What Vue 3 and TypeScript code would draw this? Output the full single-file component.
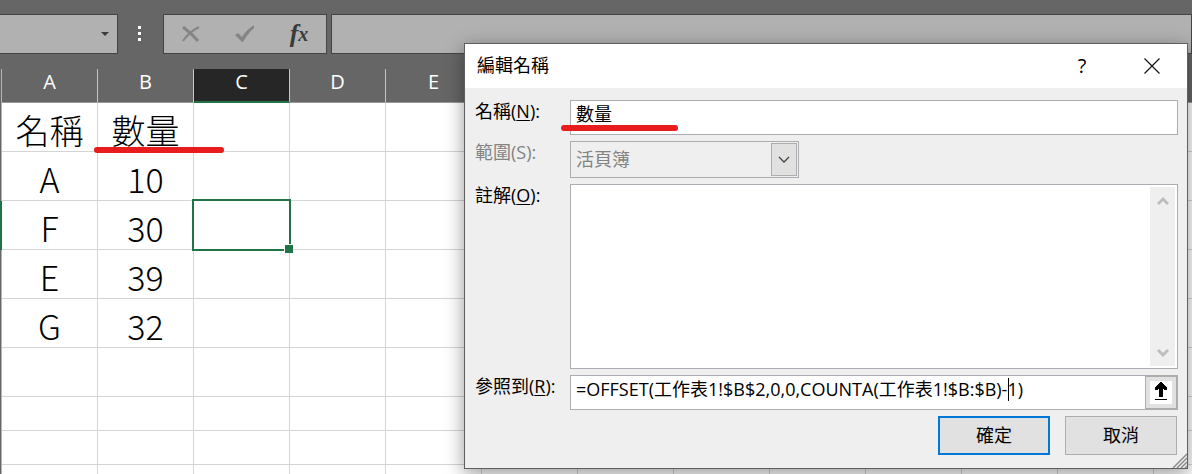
<script setup lang="ts">
import { ref } from 'vue'

const labels = ['A', 'B', 'C', 'D', 'E']
const columnCount = 13

interface Row {
  values: string[]
  short?: boolean
}

const rows: Row[] = [
  { values: ['名稱', '數量'] },
  { values: ['A', '10'] },
  { values: ['F', '30'] },
  { values: ['E', '39'] },
  { values: ['G', '32'] },
  { values: [] },
  { values: [], short: true },
  { values: [], short: true },
  { values: [], short: true },
]

const selected = { row: 2, column: 2 }

const name = ref('數量')
const scope = ref('活頁簿')
const comment = ref('')
const refersTo = ref('=OFFSET(工作表1!$B$2,0,0,COUNTA(工作表1!$B:$B)-1)')
</script>

<template>
  <main class="app">
    <header class="formula-bar">
      <button class="name-box" type="button" aria-label="名稱方塊">
        <svg width="8" height="4" viewBox="0 0 8 4"><path d="M0 0H8L4 4Z" fill="#3c3c3c" /></svg>
      </button>
      <span class="dots"><i></i><i></i><i></i></span>
      <div class="tools">
        <button type="button" aria-label="取消輸入">
          <svg width="20" height="18" viewBox="0 0 20 18" fill="none" stroke="#858585">
            <path d="M2 2C6 5 12 10 17 16" stroke-width="3" />
            <path d="M18 2C12 5 6 10 2 16" stroke-width="2" />
          </svg>
        </button>
        <button type="button" aria-label="輸入">
          <svg width="20" height="18" viewBox="0 0 20 18" fill="#858585">
            <path d="M0 10L3 8L7 12C10 7 14 3 19 0V3C14 7 11 12 8 17H7Z" />
          </svg>
        </button>
        <button class="fx" type="button" aria-label="插入函數"><span>f</span><small>x</small></button>
      </div>
      <input class="formula" type="text" aria-label="資料編輯列" />
    </header>

    <table class="sheet">
      <colgroup>
        <col class="edge-col" />
        <col v-for="c in columnCount" :key="c" class="data-col" />
      </colgroup>
      <thead>
        <tr>
          <td class="edge"></td>
          <th v-for="c in columnCount" :key="c" scope="col" :class="{ active: c - 1 === selected.column }">{{ labels[c - 1] }}</th>
        </tr>
      </thead>
      <tbody>
        <tr v-for="(row, r) in rows" :key="r" :class="{ short: row.short }">
          <td class="edge" :class="{ active: r === selected.row }"></td>
          <td v-for="c in columnCount" :key="c" class="cell">
            {{ row.values[c - 1] }}
            <span v-if="r === 0 && c === 2" class="mark cell-mark"></span>
            <span v-if="r === selected.row && c - 1 === selected.column" class="selection"></span>
          </td>
        </tr>
      </tbody>
    </table>

    <section class="dialog" role="dialog" aria-labelledby="dialog-title">
      <div class="title-bar">
        <h1 id="dialog-title">編輯名稱</h1>
        <button class="help" type="button" aria-label="說明">?</button>
        <button class="close" type="button" aria-label="關閉">
          <svg width="16" height="16" viewBox="0 0 16 16"><path d="M.5 .5L15.5 15.5M15.5 .5L.5 15.5" stroke="#111" stroke-width="1.2" /></svg>
        </button>
      </div>
      <form class="form" @submit.prevent>
        <label for="name">名稱(<u>N</u>):</label>
        <div class="field">
          <input id="name" v-model="name" type="text" />
          <span class="mark field-mark"></span>
        </div>

        <label for="scope" class="dim">範圍(S):</label>
        <div class="field scope">
          <select id="scope" v-model="scope" disabled>
            <option>活頁簿</option>
          </select>
          <span class="drop">
            <svg width="12" height="7" viewBox="0 0 12 7" fill="none"><path d="M1 1L6 6L11 1" stroke="#444" stroke-width="1.3" /></svg>
          </span>
        </div>

        <label for="comment">註解(<u>O</u>):</label>
        <div class="field">
          <textarea id="comment" v-model="comment"></textarea>
          <span class="scroll">
            <svg width="12" height="10" viewBox="0 0 12 10" fill="none"><path d="M1 8L6 3L11 8" stroke="#bdbdbd" stroke-width="3" /></svg>
            <svg width="12" height="10" viewBox="0 0 12 10" fill="none"><path d="M1 2L6 7L11 2" stroke="#bdbdbd" stroke-width="3" /></svg>
          </span>
        </div>

        <label for="refers">參照到(<u>R</u>):</label>
        <div class="field refers">
          <input id="refers" v-model="refersTo" type="text" />
          <span class="caret"></span>
          <button class="collapse" type="button" aria-label="摺疊對話方塊">
            <svg width="22" height="23" viewBox="0 0 22 23">
              <path d="M0 0H22V23H0Z" fill="#fff" />
              <path d="M10 1H12V2H13V3H14V4H15V5H16V6H17V9H14V8H13V16H9V8H8V9H5V6H6V5H7V4H8V3H9V2H10Z" fill="#000" />
              <path d="M5 18H17V19H5Z" fill="#000" />
            </svg>
          </button>
        </div>

        <div class="actions">
          <button class="primary" type="submit">確定</button>
          <button type="button">取消</button>
        </div>
      </form>
      <svg class="grip" width="15" height="15" viewBox="0 0 15 15" stroke="#8c8c8c" stroke-width="1.5">
        <path d="M1 15L15 1M5 15L15 5M9 15L15 9M13 15L15 13" />
      </svg>
    </section>
  </main>
</template>

<style>
body {
  margin: 0;
}
</style>

<style scoped>
.app {
  position: relative;
  height: 100vh;
  overflow: hidden;
  background: #666;
  font-family: "Open Sans", "Noto Sans CJK TC", sans-serif;
  font-size: 18px;
  color: #000;
}

* {
  box-sizing: border-box;
}

button,
input,
select,
textarea {
  margin: 0;
  border-radius: 0;
  font: inherit;
  color: inherit;
}

button {
  display: flex;
  align-items: center;
  justify-content: center;
  padding: 0;
  border: 0;
  background: none;
}

.formula-bar {
  display: flex;
  height: 69px;
  padding: 14px 0 15px;
}

.name-box,
.tools,
.formula {
  height: 40px;
  border: 1px solid #444;
  background: #b1b1b1;
}

.name-box {
  width: 118px;
  border-left: 0;
  justify-content: flex-end;
  padding-right: 8px;
}

.dots {
  display: flex;
  flex-direction: column;
  align-items: center;
  justify-content: center;
  gap: 3px;
  width: 45px;
  padding: 0 2px 2px 0;
}

.dots i {
  width: 3px;
  height: 3px;
  background: #fff;
}

.tools {
  display: flex;
  width: 164px;
  margin-right: 4px;
}

.tools button {
  flex: 1;
}

.tools .fx {
  color: #3a3a3a;
  font-family: "Liberation Serif", serif;
  font-style: italic;
  font-weight: 700;
  font-size: 26px;
  line-height: 24px;
}

.fx small {
  font-size: 20px;
}

.formula {
  flex: 1;
  min-width: 0;
}

.sheet {
  width: 100%;
  table-layout: fixed;
  border-spacing: 0;
}

.edge-col {
  width: 2px;
}

.data-col {
  width: 96px;
}

th {
  height: 34px;
  padding: 0 0 8px;
  border-right: 1px solid #c6c6c6;
  border-bottom: 1px solid #999;
  color: #fff;
  font-size: 20px;
  font-weight: 400;
  line-height: 25px;
}

th.active {
  padding-bottom: 7px;
  background: #262626;
  border-bottom: 2px solid #217346;
}

.edge {
  padding: 0;
  border-right: 1px solid #b5b5b5;
  background: #666;
}

.edge.active {
  background: #217346;
  border-color: #217346;
}

.cell {
  position: relative;
  height: 49px;
  padding: 5px 0 0;
  border-right: 1px solid #d4d4d4;
  border-bottom: 1px solid #d4d4d4;
  background: #fff;
  font-family: "Noto Sans CJK TC", sans-serif;
  font-size: 34px;
  font-weight: 300;
  line-height: 40px;
  text-align: center;
  white-space: nowrap;
}

.short .cell {
  height: 34px;
}

.selection {
  position: absolute;
  inset: -2px;
  border: 2px solid #217346;
  z-index: 1;
}

.selection::after {
  content: "";
  position: absolute;
  right: -4px;
  bottom: -4px;
  width: 8px;
  height: 8px;
  border: solid #fff;
  border-width: 1px 0 0 1px;
  background: #217346;
}

.mark {
  position: absolute;
  height: 6px;
  border-radius: 3px;
  background: #e81c1c;
  z-index: 2;
}

.cell-mark {
  left: -4px;
  right: -31px;
  bottom: -2px;
}

.field-mark {
  left: -9px;
  bottom: 4px;
  width: 117px;
}

.dialog {
  position: absolute;
  z-index: 3;
  top: 43px;
  left: 464px;
  right: 4px;
  border: 1px solid #5f5f5f;
  background: #efefef;
  box-shadow: 0 5px 18px rgba(0, 0, 0, 0.4);
}

.title-bar {
  display: flex;
  align-items: center;
  height: 44px;
  padding-left: 12px;
  background: #fff;
}

h1 {
  flex: 1;
  margin: 0;
  padding-bottom: 2px;
  font-size: 18px;
  font-weight: 400;
  line-height: 24px;
}

.title-bar button {
  width: 70px;
  height: 44px;
}

.title-bar .help {
  padding-bottom: 2px;
  font-size: 20px;
}

.form {
  display: grid;
  grid-template-columns: 95px 1fr;
  row-gap: 6px;
  padding: 12px 9px 13px 10px;
}

label {
  line-height: 23px;
  white-space: nowrap;
}

u {
  text-underline-offset: 2px;
}

.dim {
  color: #838383;
}

.field {
  position: relative;
  display: flex;
}

.field input,
textarea,
select {
  width: 100%;
  border: 1px solid #abadb3;
  background: #fff;
  outline: none;
}

.field input {
  height: 35px;
  padding: 0 5px 9px;
}

.scope {
  width: 229px;
}

select {
  height: 37px;
  padding: 0 5px 2px;
  appearance: none;
  background: #efefef;
  color: #838383;
  opacity: 1;
}

.drop {
  position: absolute;
  top: 2px;
  right: 2px;
  bottom: 2px;
  display: flex;
  align-items: center;
  justify-content: center;
  width: 26px;
  border: 1px solid #adadad;
  background: #e1e1e1;
}

textarea {
  height: 185px;
  resize: none;
}

.scroll {
  position: absolute;
  top: 3px;
  right: 3px;
  bottom: 3px;
  display: flex;
  flex-direction: column;
  align-items: center;
  justify-content: space-between;
  width: 25px;
  padding: 9px 0 8px;
  background: #efefef;
}

.field.refers input {
  padding-right: 34px;
}

.caret {
  position: absolute;
  top: 3px;
  left: 438px;
  width: 1px;
  height: 23px;
  background: #000;
}

.collapse {
  position: absolute;
  top: 0;
  right: 0;
  width: 33px;
  height: 35px;
  border: 2px solid #adadad;
  border-left-width: 1px;
  background: #e1e1e1;
}

.actions {
  grid-column: 1 / -1;
  display: flex;
  justify-content: flex-end;
  gap: 15px;
  padding-right: 1px;
}

.actions button {
  width: 112px;
  height: 39px;
  padding-bottom: 3px;
  border: 1px solid #adadad;
  background: #e1e1e1;
}

.actions .primary {
  border: 2px solid #0078d7;
}

.grip {
  position: absolute;
  right: 0;
  bottom: 0;
}
</style>
